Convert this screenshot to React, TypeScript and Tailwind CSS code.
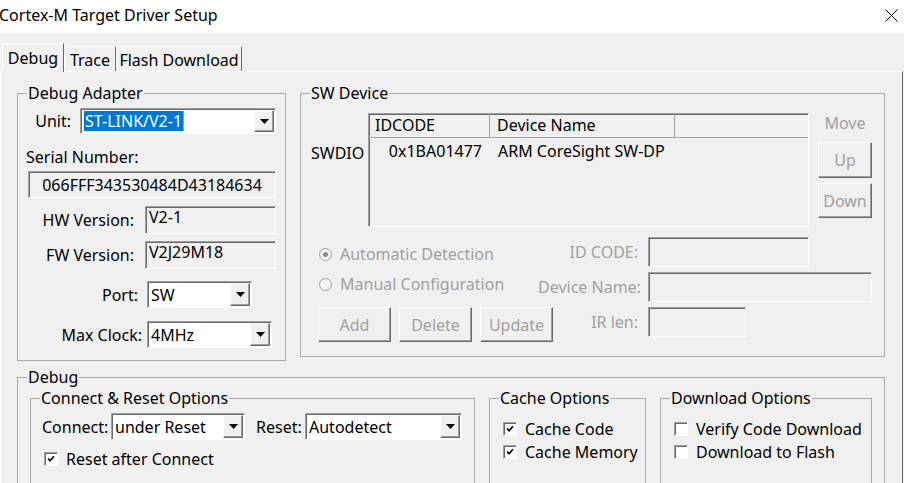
import type { ReactNode } from 'react';

/* ── shared 3D borders (Win32 look) ─────────────────────────────────── */

const sunken =
  'border border-t-[#a0a0a0] border-l-[#a0a0a0] border-b-white border-r-white shadow-[inset_1px_1px_0_#696969]';
const raised =
  'bg-[#f0f0f0] border border-t-white border-l-white border-r-[#696969] border-b-[#696969] shadow-[inset_-1px_-1px_0_#a0a0a0]';

/* ── GroupBox ───────────────────────────────────────────────────────── */

const GroupBox = ({
  title,
  className = '',
  children,
}: {
  title: string;
  className?: string;
  children?: ReactNode;
}) => (
  <fieldset className={`min-w-0 shrink-0 border border-[#a9a9a9] pl-[9px] ${className}`}>
    <legend className="px-[1px] leading-[20px]">{title}</legend>
    {children}
  </fieldset>
);

/* ── Combo ──────────────────────────────────────────────────────────── */

const Combo = ({
  value,
  className = '',
  selected = false,
}: {
  value: string;
  className?: string;
  selected?: boolean;
}) => (
  <div className={`flex shrink-0 bg-white p-[1px] ${sunken} ${className}`}>
    <div className="flex flex-1 items-center pl-[2px] leading-[20px] whitespace-nowrap">
      {selected ? (
        <span className="bg-[#0078d7] px-[1px] text-white border-r border-r-[#ff8c00]">{value}</span>
      ) : (
        <span>{value}</span>
      )}
    </div>
    <div className={`flex w-[20px] items-center justify-center ${raised}`}>
      <svg width="9" height="5" viewBox="0 0 9 5" aria-hidden="true">
        <path d="M0 0h9L4.5 5z" fill="#000" />
      </svg>
    </div>
  </div>
);

/* ── ReadBox — read-only edit field ─────────────────────────────────── */

const ReadBox = ({ value = '', className = '' }: { value?: string; className?: string }) => (
  <div className={`shrink-0 bg-[#f0f0f0] leading-[20px] ${sunken} ${className}`}>{value}</div>
);

/* ── Button ─────────────────────────────────────────────────────────── */

const Btn = ({ label, className = '' }: { label: string; className?: string }) => (
  <div className={`flex shrink-0 items-center justify-center text-[#a0a0a0] ${raised} ${className}`}>{label}</div>
);

/* ── CheckBox / Radio ───────────────────────────────────────────────── */

const CheckBox = ({ label, checked = false, className = '' }: { label: string; checked?: boolean; className?: string }) => (
  <div className={`flex h-[20px] items-center leading-[20px] ${className}`}>
    <span className={`flex h-[14px] w-[14px] shrink-0 items-center justify-center bg-white ${sunken}`}>
      {checked && (
        <svg width="8" height="8" viewBox="0 0 8 8" aria-hidden="true">
          <path d="M1 3.5l2 2.2L7 1.2" stroke="#000" strokeWidth={1.6} fill="none" />
        </svg>
      )}
    </span>
    <span className="ml-[8px] whitespace-nowrap">{label}</span>
  </div>
);

const Radio = ({ label, checked = false }: { label: string; checked?: boolean }) => (
  <div className="flex h-[20px] items-center leading-[20px] text-[#a0a0a0]">
    <span className="flex h-[13px] w-[13px] shrink-0 items-center justify-center rounded-full border border-[#a0a0a0] bg-[#f4f4f4]">
      {checked && <span className="h-[5px] w-[5px] rounded-full bg-[#8a8a8a]" />}
    </span>
    <span className="ml-[8px] whitespace-nowrap">{label}</span>
  </div>
);

/* ── Tabs ───────────────────────────────────────────────────────────── */

const Tab = ({ label, active = false, className = '' }: { label: string; active?: boolean; className?: string }) => (
  <div
    className={[
      'flex shrink-0 items-center justify-center whitespace-nowrap bg-[#f0f0f0] border-l border-t border-r border-l-white border-t-white border-r-[#696969] leading-[20px]',
      active ? 'relative z-10 -mb-[1px] h-[29px]' : 'h-[25px] pt-[1px]',
      className,
    ].join(' ')}
  >
    {label}
  </div>
);

/* ── App ────────────────────────────────────────────────────────────── */

export default function App() {
  return (
    <div className="h-[483px] w-[904px] overflow-hidden bg-[#f0f0f0] font-['Noto_Sans',sans-serif] text-[16px] text-black">
      {/* title bar */}
      <div className="flex h-[33px] items-center justify-between bg-white">
        <span className="-ml-[1px] -mt-[4px] leading-[20px]">Cortex-M Target Driver Setup</span>
        <svg className="mr-[6px] -mt-[3px]" width="13" height="13" viewBox="0 0 13 13" aria-hidden="true">
          <path d="M0.5 0.5l12 12M12.5 0.5l-12 12" stroke="#000" strokeWidth={1} />
        </svg>
      </div>

      {/* tab strip */}
      <div className="flex h-[38px] items-end pl-[2px]">
        <Tab label="Debug" active className="w-[62px]" />
        <Tab label="Trace" className="w-[52px]" />
        <Tab label="Flash Download" className="w-[126px]" />
      </div>

      {/* tab page */}
      <div className="h-[420px] w-[903px] border-l border-t border-r border-l-white border-t-white border-r-[#696969] pl-[16px] pt-[11px]">
        <div className="flex">
          {/* Debug Adapter */}
          <GroupBox title="Debug Adapter" className="h-[278px] w-[269px]">
            <div className="mt-[5px] flex items-center">
              <span className="mr-[9px] w-[44px] text-right">Unit:</span>
              <Combo value="ST-LINK/V2-1" selected className="h-[26px] w-[196px]" />
            </div>
            <div className="-ml-[1px] mt-[13px] leading-[20px]">Serial Number:</div>
            <ReadBox value="066FFF343530484D43184634" className="ml-[1px] mt-[4px] flex h-[27px] w-[248px] items-center justify-center" />
            <div className="mt-[8px] flex items-center">
              <span className="mr-[11px] w-[107px] text-right whitespace-nowrap">HW Version:</span>
              <ReadBox value="V2-1" className="h-[28px] w-[131px] pl-[3px]" />
            </div>
            <div className="mt-[7px] flex items-center">
              <span className="mr-[11px] w-[107px] text-right whitespace-nowrap">FW Version:</span>
              <ReadBox value="V2J29M18" className="h-[28px] w-[131px] pl-[3px]" />
            </div>
            <div className="mt-[12px] flex items-center">
              <span className="mr-[9px] w-[111px] text-right">Port:</span>
              <Combo value="SW" className="h-[27px] w-[105px]" />
            </div>
            <div className="mt-[13px] flex items-center">
              <span className="mr-[5px] w-[115px] text-right whitespace-nowrap">Max Clock:</span>
              <Combo value="4MHz" className="h-[27px] w-[125px]" />
            </div>
          </GroupBox>

          {/* SW Device */}
          <GroupBox title="SW Device" className="ml-[14px] h-[274px] w-[585px]">
            <div className="mt-[10px] flex">
              <div className="w-[58px] shrink-0 pl-[1px] pt-[30px] leading-[20px]">SWDIO</div>
              <div className={`h-[114px] w-[441px] shrink-0 bg-[#f0f0f0] ${sunken}`}>
                <div className="flex h-[24px] border-b border-b-[#a0a0a0] leading-[22px]">
                  <div className="w-[121px] border-r border-r-[#a0a0a0] pl-[6px]">IDCODE</div>
                  <div className="w-[185px] border-r border-r-[#a0a0a0] pl-[7px]">Device Name</div>
                </div>
                <div className="flex h-[26px] items-center whitespace-nowrap">
                  <div className="w-[113px] text-right">0x1BA01477</div>
                  <div className="ml-[16px]">ARM CoreSight SW-DP</div>
                </div>
              </div>
              <div className="ml-[9px] flex w-[54px] shrink-0 flex-col">
                <div className="text-center leading-[20px] text-[#a0a0a0]">Move</div>
                <Btn label="Up" className="mt-[9px] h-[36px] w-[54px]" />
                <Btn label="Down" className="mt-[5px] h-[35px] w-[54px]" />
              </div>
            </div>

            <div className="mt-[10px] flex h-[30px] items-center">
              <div className="w-[228px] shrink-0 self-start pl-[9px] pt-[7px]">
                <Radio label="Automatic Detection" checked />
              </div>
              <span className="mr-[10px] w-[100px] text-right text-[#a0a0a0]">ID CODE:</span>
              <ReadBox className="h-[30px] w-[161px]" />
            </div>
            <div className="mt-[5px] flex h-[30px] items-center">
              <div className="w-[228px] shrink-0 self-start pl-[9px] pt-[2px]">
                <Radio label="Manual Configuration" />
              </div>
              <span className="mr-[10px] w-[100px] text-right text-[#a0a0a0] whitespace-nowrap">Device Name:</span>
              <ReadBox className="h-[30px] w-[224px]" />
            </div>
            <div className="mt-[5px] flex items-start">
              <div className="flex w-[242px] shrink-0 gap-[8px] pl-[8px]">
                <Btn label="Add" className="h-[35px] w-[73px]" />
                <Btn label="Delete" className="h-[35px] w-[73px]" />
                <Btn label="Update" className="h-[35px] w-[73px]" />
              </div>
              <span className="mr-[10px] flex h-[30px] w-[86px] items-center justify-end text-[#a0a0a0]">IR len:</span>
              <ReadBox className="h-[30px] w-[98px]" />
            </div>
          </GroupBox>
        </div>

        {/* Debug */}
        <GroupBox title="Debug" className="mt-[6px] h-[130px] w-[868px]">
          <div className="mt-[1px] flex">
            <GroupBox title="Connect & Reset Options" className="ml-[3px] h-[110px] w-[445px]">
              <div className="mt-[5px] flex items-center">
                <span className="ml-[2px] w-[69px] whitespace-nowrap">Connect:</span>
                <Combo value="under Reset" className="h-[27px] w-[134px]" />
                <span className="ml-[11px] w-[49px]">Reset:</span>
                <Combo value="Autodetect" className="h-[27px] w-[157px]" />
              </div>
              <CheckBox label="Reset after Connect" checked className="ml-[4px] mt-[9px]" />
            </GroupBox>

            <GroupBox title="Cache Options" className="ml-[14px] h-[110px] w-[157px]">
              <CheckBox label="Cache Code" checked className="ml-[4px] mt-[11px]" />
              <CheckBox label="Cache Memory" checked className="ml-[4px] mt-[3px]" />
            </GroupBox>

            <GroupBox title="Download Options" className="ml-[14px] h-[110px] w-[212px]">
              <CheckBox label="Verify Code Download" className="ml-[4px] mt-[11px]" />
              <CheckBox label="Download to Flash" className="ml-[4px] mt-[3px]" />
            </GroupBox>
          </div>
        </GroupBox>
      </div>
    </div>
  );
}
